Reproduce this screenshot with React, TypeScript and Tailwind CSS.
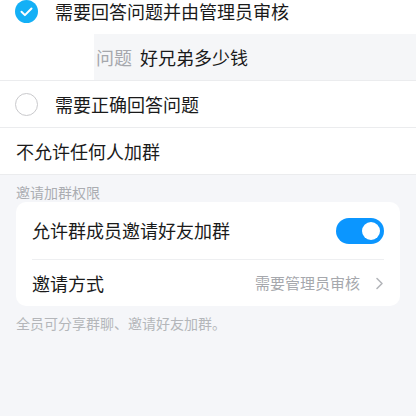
const CheckCircle = () => (
  <svg width="23" height="23" viewBox="0 0 23 23" aria-hidden>
    <circle cx="11.5" cy="11.5" r="11.5" fill="#14b0f6" />
    <path d="M6.5 11.8l3.4 3.3 6.6-6.6" fill="none" stroke="#fff" strokeWidth="2" strokeLinecap="round" strokeLinejoin="round" />
  </svg>
)

const EmptyCircle = () => (
  <span className="block h-[23px] w-[23px] rounded-full border border-[#c9c9cc] bg-white" />
)

const Chevron = () => (
  <svg width="9" height="13" viewBox="0 0 9 13" aria-hidden>
    <path d="M2 1.5l5 5-5 5" fill="none" stroke="#b4b6ba" strokeWidth="1.6" strokeLinecap="round" strokeLinejoin="round" />
  </svg>
)

export default function App() {
  return (
    <div className="h-[416px] w-[416px] overflow-hidden bg-[#f5f6f9] font-['Noto_Sans_CJK_SC',sans-serif] text-[#1a1a1a]">
      <div className="bg-white">
        <div className="border-b border-[#ebecee]">
          <div className="flex h-[34px] items-center pb-[12px]">
            <span className="ml-[15px]">
              <CheckCircle />
            </span>
            <span className="ml-[17px] text-[18px] leading-[18px]">需要回答问题并由管理员审核</span>
          </div>
          <div className="ml-[94px] flex h-[46px] items-center bg-[#f5f6f8] pl-[2px] text-[18px]">
            <span className="text-[#a6a8ad]">问题</span>
            <span className="ml-[8px]">好兄弟多少钱</span>
          </div>
        </div>
        <div className="flex h-[47px] items-center border-b border-[#ebecee]">
          <span className="ml-[15px]">
            <EmptyCircle />
          </span>
          <span className="ml-[17px] text-[18px]">需要正确回答问题</span>
        </div>
        <div className="flex h-[47px] items-center border-b border-[#ebecee] px-4 text-[18px]">
          不允许任何人加群
        </div>
      </div>

      <div className="px-4 pt-[7px] text-[14px] leading-[20px] text-[#abadb2]">邀请加群权限</div>

      <div className="mx-4 rounded-[10px] bg-white">
        <div className="flex h-[57px] items-center justify-between px-4">
          <span className="text-[18px]">允许群成员邀请好友加群</span>
          <button className="flex h-[26px] w-[48px] items-center justify-end rounded-full bg-[#0b96ff] pr-[4px]">
            <span className="h-[18px] w-[18px] rounded-full bg-white" />
          </button>
        </div>
        <div className="mx-4 h-px bg-[#eeeff1]" />
        <div className="flex h-[46px] items-center justify-between px-4">
          <span className="text-[18px]">邀请方式</span>
          <span className="flex items-center gap-[15px]">
            <span className="text-[15px] text-[#a6a8ad]">需要管理员审核</span>
            <Chevron />
          </span>
        </div>
      </div>

      <div className="px-4 pt-[7px] text-[14px] leading-[20px] text-[#b4b6ba]">全员可分享群聊、邀请好友加群。</div>
    </div>
  )
}
